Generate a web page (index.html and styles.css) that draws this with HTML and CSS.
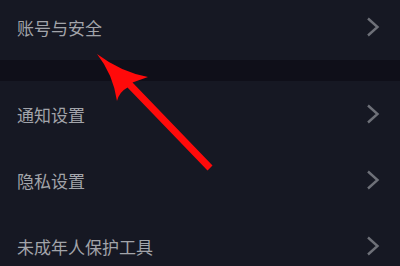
FILE: index.html
```html
<!DOCTYPE html>
<html lang="zh-CN">
<head>
  <meta charset="UTF-8" />
  <title>设置</title>
  <meta name="viewport" content="width=device-width, initial-scale=1.0"/>
  <link rel="stylesheet" href="styles.css">
</head>
<body>
  <div class="page">
    <div class="group first">
      <div class="row">
        <span class="label">账号与安全</span>
        <svg class="chevron" viewBox="0 0 14 20"><path d="M2 1.5 L11.5 10 L2 18.5"/></svg>
      </div>
    </div>

    <div class="band"></div>

    <div class="group">
      <div class="row">
        <span class="label">通知设置</span>
        <svg class="chevron" viewBox="0 0 14 20"><path d="M2 1.5 L11.5 10 L2 18.5"/></svg>
      </div>
      <div class="row">
        <span class="label">隐私设置</span>
        <svg class="chevron" viewBox="0 0 14 20"><path d="M2 1.5 L11.5 10 L2 18.5"/></svg>
      </div>
      <div class="row">
        <span class="label">未成年人保护工具</span>
        <svg class="chevron" viewBox="0 0 14 20"><path d="M2 1.5 L11.5 10 L2 18.5"/></svg>
      </div>
    </div>

    <!-- red pointer drawn over the list -->
    <svg class="pointer" viewBox="0 0 400 266">
      <path d="M97 54 Q121 72 148 77 L132.5 82.6 L212.5 165.6 L207.5 170.4 L127.5 87.4 Q119 92 117 101 Q113 74 97 54 Z"/>
    </svg>
  </div>
</body>
</html>
```

FILE: styles.css
```css
body {
  margin: 0;
  background-color: #161823;
  font-family: "Noto Sans CJK SC", "Noto Sans", sans-serif;
  overflow: hidden;
}

.page {
  position: relative;
  width: 400px;
  height: 266px;
  overflow: hidden;
}

.group.first {
  margin-top: -6px;
}

.row {
  display: flex;
  align-items: center;
  justify-content: space-between;
  height: 66px;
  padding: 0 20px 0 17px;
}

.label {
  font-size: 17px;
  color: #a2a4aa;
}

.chevron {
  width: 14px;
  height: 20px;
  fill: none;
  stroke: #6e7078;
  stroke-width: 2.4;
}

.band {
  height: 21px;
  background-color: #0f0f19;
}

.pointer {
  position: absolute;
  left: 0;
  top: 0;
  width: 400px;
  height: 266px;
}

.pointer path {
  fill: #ff0a0a;
}
```
